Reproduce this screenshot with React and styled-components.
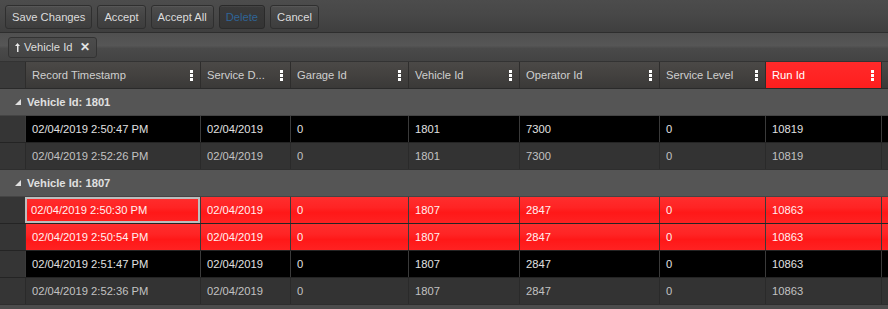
import React from "react";
import styled, { createGlobalStyle, css } from "styled-components";

const GlobalStyle = createGlobalStyle`
  html, body {
    margin: 0;
    padding: 0;
    background: #4a4a4a;
  }
  body {
    font-family: "Liberation Sans", Arial, sans-serif;
    font-size: 11.2px;
  }
`;

const columns = [
  { key: "ts", title: "Record Timestamp" },
  { key: "sd", title: "Service D..." },
  { key: "garage", title: "Garage Id" },
  { key: "vehicle", title: "Vehicle Id" },
  { key: "operator", title: "Operator Id" },
  { key: "level", title: "Service Level" },
  { key: "run", title: "Run Id", active: true },
];

const groups = [
  {
    label: "Vehicle Id: 1801",
    rows: [
      { variant: "dark", ts: "02/04/2019 2:50:47 PM", vehicle: "1801", operator: "7300", run: "10819" },
      { variant: "gray", ts: "02/04/2019 2:52:26 PM", vehicle: "1801", operator: "7300", run: "10819" },
    ],
  },
  {
    label: "Vehicle Id: 1807",
    rows: [
      { variant: "red", selected: true, ts: "02/04/2019 2:50:30 PM", vehicle: "1807", operator: "2847", run: "10863" },
      { variant: "red", ts: "02/04/2019 2:50:54 PM", vehicle: "1807", operator: "2847", run: "10863" },
      { variant: "dark", ts: "02/04/2019 2:51:47 PM", vehicle: "1807", operator: "2847", run: "10863" },
      { variant: "gray", ts: "02/04/2019 2:52:36 PM", vehicle: "1807", operator: "2847", run: "10863" },
    ],
  },
];

const gridCols = "25px 175px 90px 118px 111px 140px 106px 116px 1fr";

const Page = styled.div`
  width: 888px;
  height: 309px;
  overflow: hidden;
  background: #4a4a4a;
  color: #ddd;
`;

const Toolbar = styled.div`
  height: 32px;
  display: flex;
  align-items: center;
  gap: 5px;
  padding: 0 5px;
  background: linear-gradient(#4c4c4c, #474747 50%, #3f3f3f);
  border-bottom: 1px solid #2e2e2e;
`;

const ToolButton = styled.button`
  height: 24px;
  padding: 0 6px;
  margin-top: 1px;
  font-family: "Liberation Sans", Arial, sans-serif;
  font-size: 11.2px;
  color: #dcdcdc;
  border: 1px solid #2f2f2f;
  border-radius: 3px;
  background: linear-gradient(#4e4e4e, #444 50%, #3d3d3d);
  box-shadow: inset 0 1px 0 rgba(255, 255, 255, 0.05);
  cursor: pointer;

  ${(p) =>
    p.disabled &&
    css`
      color: #2f6496;
      background: linear-gradient(#3a3a3a, #343434);
      border-color: #2a2a2a;
      cursor: default;
    `}
`;

const GroupPanel = styled.div`
  height: 29px;
  display: flex;
  align-items: center;
  padding: 0 8px;
  background: linear-gradient(#505050, #565656 45%, #4a4a4a 55%, #434343);
  border-bottom: 1px solid #333;
  box-sizing: border-box;
`;

const GroupChip = styled.div`
  height: 21px;
  display: flex;
  align-items: center;
  gap: 3px;
  padding: 0 6px 0 5px;
  border: 1px solid #333;
  border-radius: 3px;
  background: linear-gradient(#4c4c4c, #444);
  color: #ddd;
  box-sizing: border-box;
`;

const CloseMark = styled.span`
  font-weight: bold;
  font-size: 12px;
  margin-left: 4px;
  color: #e4e4e4;
`;

const Grid = styled.div`
  display: flex;
  flex-direction: column;
`;

const HeaderRow = styled.div`
  display: grid;
  grid-template-columns: ${gridCols};
  height: 27px;
  background: linear-gradient(#4b4947, #43413f 50%, #3a3938);
  border-bottom: 1px solid #2a2a2a;
  box-sizing: border-box;
`;

const HeaderCell = styled.div`
  display: flex;
  align-items: center;
  justify-content: space-between;
  padding: 0 7px 0 6px;
  color: #cfcfcf;
  border-left: 1px solid #2e2d2c;
  white-space: nowrap;
  overflow: hidden;

  ${(p) =>
    p.$active &&
    css`
      background: linear-gradient(#ff2a2a, #ff1e1e);
      color: #fff;
    `}
`;

const HeaderIndent = styled.div`
  background: #3a3a3a;
`;

const GroupRow = styled.div`
  height: 27px;
  display: flex;
  align-items: center;
  padding-left: 15px;
  gap: 6px;
  background: #555;
  color: #e0e0e0;
  font-weight: bold;
  border-bottom: 1px solid #444;
  box-sizing: border-box;
`;

const rowStyles = {
  dark: css`
    background: #000;
    color: #e0e0e0;
  `,
  gray: css`
    background: #333;
    color: #c2c2c2;
  `,
  red: css`
    background: linear-gradient(#ff2e2e, #ff2424 40%, #ff1818 60%, #ff2222);
    color: #fff0f0;
  `,
};

const DataRow = styled.div`
  display: grid;
  grid-template-columns: ${gridCols};
  height: 27px;
  ${(p) => rowStyles[p.$variant]}
  border-bottom: 1px solid ${(p) => (p.$variant === "gray" ? "#2e2e2e" : "#242424")};
  box-sizing: border-box;
`;

const IndentCell = styled.div`
  background: #353535;
`;

const Cell = styled.div`
  display: flex;
  align-items: center;
  padding-left: 6px;
  border-left: 1px solid ${(p) => (p.$variant === "gray" ? "#2a2a2a" : "#3a3a3a")};
  white-space: nowrap;
  overflow: hidden;
  box-sizing: border-box;

  ${(p) =>
    p.$selected &&
    css`
      border: 2px solid #bdbdbd;
      padding-left: 4px;
    `}
`;

const Footer = styled.div`
  height: 4px;
  background: #4c4c4c;
`;

const MenuDots = () => (
  <svg width="3" height="11" viewBox="0 0 3 11">
    <rect x="0" y="0" width="3" height="3" fill="#fff" />
    <rect x="0" y="4" width="3" height="3" fill="#fff" />
    <rect x="0" y="8" width="3" height="3" fill="#fff" />
  </svg>
);

const SortUp = () => (
  <svg width="7" height="11" viewBox="0 0 7 11">
    <path d="M3.5 1 L1 4 H6 Z" fill="#e8e8e8" />
    <rect x="3" y="3" width="1.5" height="7" fill="#e8e8e8" />
  </svg>
);

const Caret = () => (
  <svg width="6" height="6" viewBox="0 0 6 6">
    <path d="M6 0 V6 H0 Z" fill="#e0e0e0" />
  </svg>
);

const cellValue = (row, key) => {
  switch (key) {
    case "sd":
      return "02/04/2019";
    case "garage":
    case "level":
      return "0";
    default:
      return row[key];
  }
};

const App = () => {
  return (
    <Page>
      <GlobalStyle />
      <Toolbar>
        <ToolButton>Save Changes</ToolButton>
        <ToolButton>Accept</ToolButton>
        <ToolButton>Accept All</ToolButton>
        <ToolButton disabled>Delete</ToolButton>
        <ToolButton>Cancel</ToolButton>
      </Toolbar>
      <GroupPanel>
        <GroupChip>
          <SortUp />
          <span>Vehicle Id</span>
          <CloseMark>✕</CloseMark>
        </GroupChip>
      </GroupPanel>
      <Grid>
        <HeaderRow>
          <HeaderIndent />
          {columns.map((c) => (
            <HeaderCell key={c.key} $active={c.active}>
              <span>{c.title}</span>
              <MenuDots />
            </HeaderCell>
          ))}
          <HeaderCell />
        </HeaderRow>
        {groups.map((g) => (
          <React.Fragment key={g.label}>
            <GroupRow>
              <Caret />
              <span>{g.label}</span>
            </GroupRow>
            {g.rows.map((r) => (
              <DataRow key={r.ts} $variant={r.variant}>
                <IndentCell />
                {columns.map((c, i) => (
                  <Cell
                    key={c.key}
                    $variant={r.variant}
                    $selected={r.selected && i === 0}
                  >
                    {cellValue(r, c.key)}
                  </Cell>
                ))}
                <Cell $variant={r.variant} />
              </DataRow>
            ))}
          </React.Fragment>
        ))}
        <Footer />
      </Grid>
    </Page>
  );
};

export default App;
